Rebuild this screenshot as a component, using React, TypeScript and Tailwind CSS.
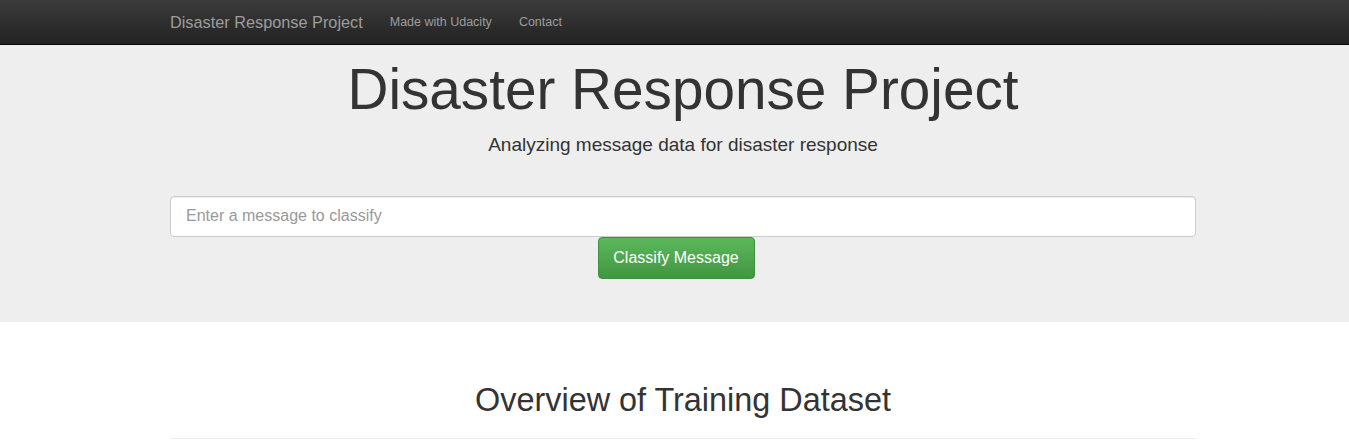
import React from "react";

export default function App() {
  return (
    <div className="min-h-[441px] bg-white text-[#333]" style={{ fontFamily: '"Liberation Sans", Arial, sans-serif' }}>
      <nav className="h-[45px] border-b border-[#080808] bg-gradient-to-b from-[#3c3c3c] to-[#222222]">
        <div className="ml-[170px] flex h-full w-[1026px] items-center">
          <span className="text-[16.3px] text-[#9d9d9d]">Disaster Response Project</span>
          <span className="ml-[27px] text-[12.5px] text-[#9d9d9d]">Made with Udacity</span>
          <span className="ml-[27px] text-[12.5px] text-[#9d9d9d]">Contact</span>
        </div>
      </nav>
      <div className="h-[277px] bg-[#eeeeee]">
        <div className="ml-[170px] flex w-[1026px] flex-col items-center">
          <h1 className="mt-[14px] text-[56.7px] leading-[1.1] text-[#333]">Disaster Response Project</h1>
          <p className="mt-[11px] text-[19px] leading-[1.4] text-[#333]">Analyzing message data for disaster response</p>
          <input
            className="mt-[37px] h-[41px] w-full rounded-[4px] border border-[#ccc] bg-white px-[15px] text-[16px] text-[#555] shadow-[inset_0_1px_1px_rgba(0,0,0,0.075)] outline-none placeholder:text-[#999]"
            placeholder="Enter a message to classify"
          />
          <button className="mr-[14px] h-[42px] w-[157px] rounded-[4px] border border-[#3e8f3e] bg-gradient-to-b from-[#5cb85c] to-[#419641] text-[16px] text-white">
            Classify Message
          </button>
        </div>
      </div>
      <div className="ml-[170px] w-[1026px]">
        <h2 className="mt-[61px] text-center text-[32.4px] leading-[1.1] text-[#333]">Overview of Training Dataset</h2>
        <hr className="mt-[19px] border-t border-[#eee]" />
      </div>
    </div>
  );
}
